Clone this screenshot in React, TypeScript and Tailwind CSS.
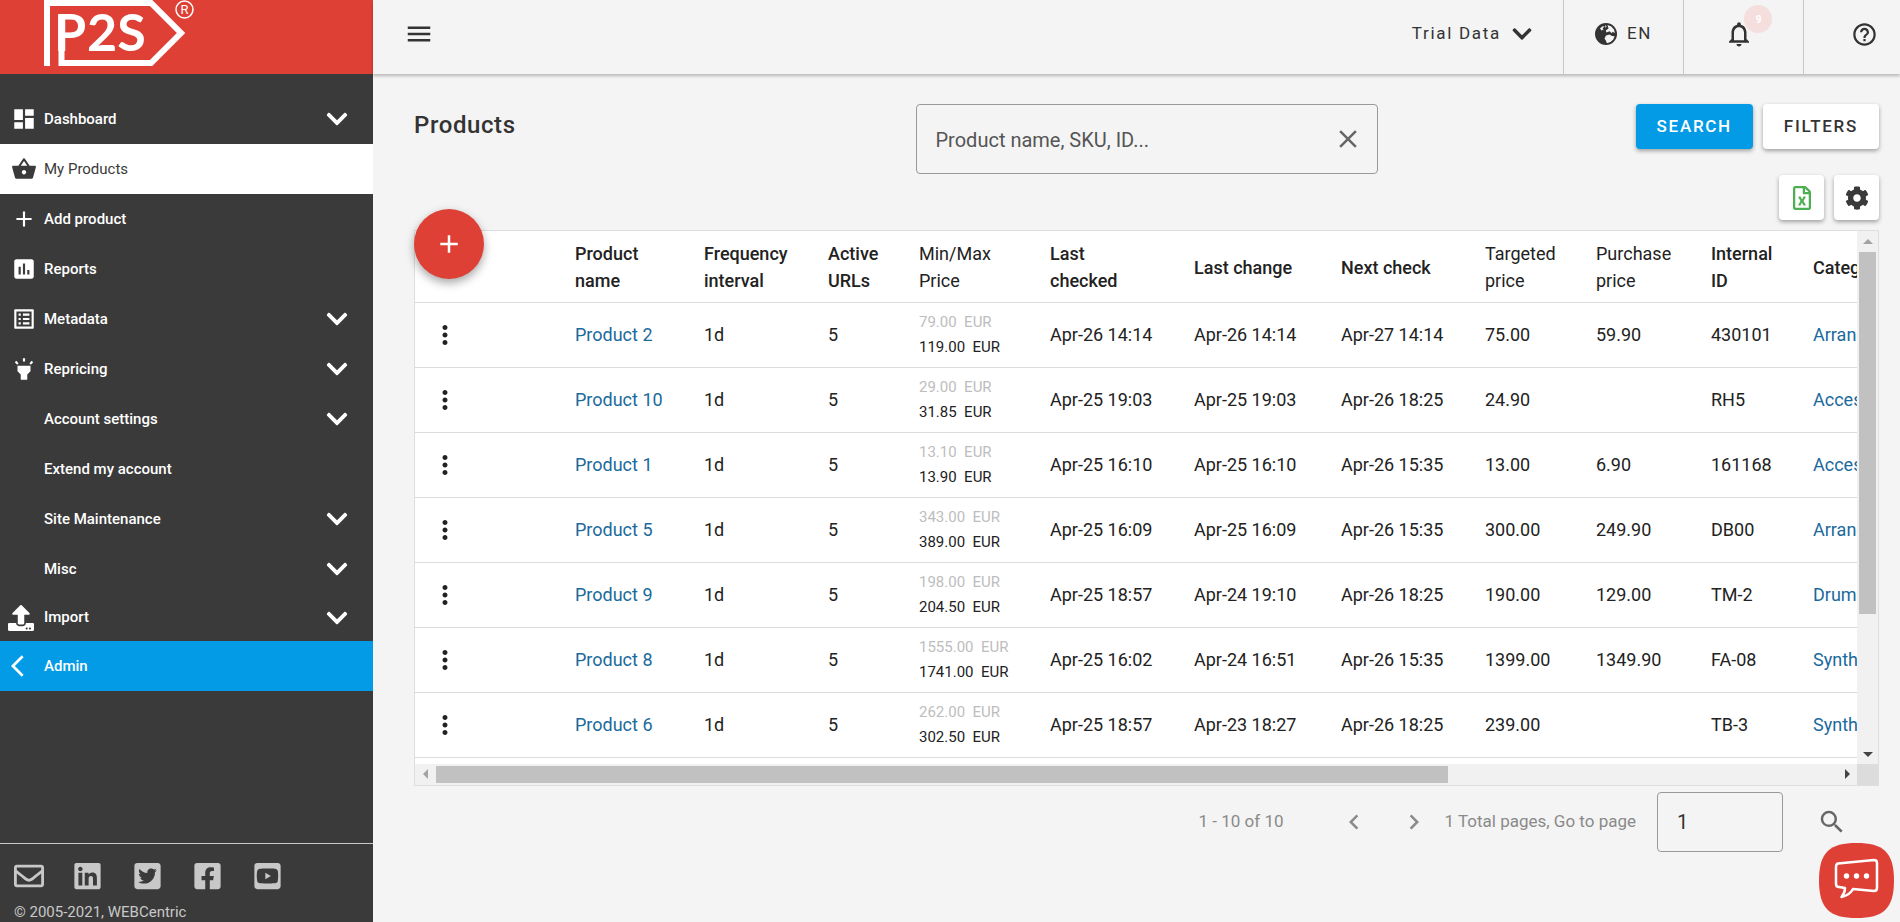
import type { ReactNode } from "react";
import type { IconType } from "react-icons";
import {
  MdAdd,
  MdArrowBackIos,
  MdAssessment,
  MdChevronLeft,
  MdChevronRight,
  MdClear,
  MdDashboard,
  MdHelpOutline,
  MdHighlight,
  MdListAlt,
  MdMenu,
  MdMoreVert,
  MdNotificationsNone,
  MdSearch,
  MdShoppingBasket,
} from "react-icons/md";
import {
  FaChevronDown,
  FaCog,
  FaFacebookSquare,
  FaLinkedin,
  FaRegEnvelope,
  FaRegFileExcel,
  FaTwitterSquare,
  FaUpload,
  FaYoutubeSquare,
} from "react-icons/fa";

type NavItem = {
  label: string;
  icon?: IconType;
  expandable?: boolean;
  tone?: "active" | "accent";
};

const navItems: NavItem[] = [
  { label: "Dashboard", icon: MdDashboard, expandable: true },
  { label: "My Products", icon: MdShoppingBasket, tone: "active" },
  { label: "Add product", icon: MdAdd },
  { label: "Reports", icon: MdAssessment },
  { label: "Metadata", icon: MdListAlt, expandable: true },
  { label: "Repricing", icon: MdHighlight, expandable: true },
  { label: "Account settings", expandable: true },
  { label: "Extend my account" },
  { label: "Site Maintenance", expandable: true },
  { label: "Misc", expandable: true },
  { label: "Import", icon: FaUpload, expandable: true },
  { label: "Admin", icon: MdArrowBackIos, tone: "accent" },
];

const socials: { label: string; icon: IconType; width: string }[] = [
  { label: "Email", icon: FaRegEnvelope, width: "w-[30px]" },
  { label: "LinkedIn", icon: FaLinkedin, width: "w-[27px]" },
  { label: "Twitter", icon: FaTwitterSquare, width: "w-[27px]" },
  { label: "Facebook", icon: FaFacebookSquare, width: "w-[27px]" },
  { label: "YouTube", icon: FaYoutubeSquare, width: "w-[27px]" },
];

const columns: { label: string; width: string; bold: boolean }[] = [
  { label: "Product name", width: "w-[129px]", bold: true },
  { label: "Frequency interval", width: "w-[124px]", bold: true },
  { label: "Active URLs", width: "w-[91px]", bold: true },
  { label: "Min/Max Price", width: "w-[131px]", bold: false },
  { label: "Last checked", width: "w-[144px]", bold: true },
  { label: "Last change", width: "w-[147px]", bold: true },
  { label: "Next check", width: "w-[144px]", bold: true },
  { label: "Targeted price", width: "w-[111px]", bold: false },
  { label: "Purchase price", width: "w-[115px]", bold: false },
  { label: "Internal ID", width: "w-[102px]", bold: true },
  { label: "Category", width: "w-[618px]", bold: true },
];

type Product = {
  name: string;
  min: string;
  max: string;
  checked: string;
  change: string;
  next: string;
  target: string;
  purchase: string;
  id: string;
  category: string;
};

const products: Product[] = [
  { name: "Product 2", min: "79.00", max: "119.00", checked: "Apr-26 14:14", change: "Apr-26 14:14", next: "Apr-27 14:14", target: "75.00", purchase: "59.90", id: "430101", category: "Arrangers" },
  { name: "Product 10", min: "29.00", max: "31.85", checked: "Apr-25 19:03", change: "Apr-25 19:03", next: "Apr-26 18:25", target: "24.90", purchase: "", id: "RH5", category: "Accessories" },
  { name: "Product 1", min: "13.10", max: "13.90", checked: "Apr-25 16:10", change: "Apr-25 16:10", next: "Apr-26 15:35", target: "13.00", purchase: "6.90", id: "161168", category: "Accessories" },
  { name: "Product 5", min: "343.00", max: "389.00", checked: "Apr-25 16:09", change: "Apr-25 16:09", next: "Apr-26 15:35", target: "300.00", purchase: "249.90", id: "DB00", category: "Arrangers" },
  { name: "Product 9", min: "198.00", max: "204.50", checked: "Apr-25 18:57", change: "Apr-24 19:10", next: "Apr-26 18:25", target: "190.00", purchase: "129.00", id: "TM-2", category: "Drums" },
  { name: "Product 8", min: "1555.00", max: "1741.00", checked: "Apr-25 16:02", change: "Apr-24 16:51", next: "Apr-26 15:35", target: "1399.00", purchase: "1349.90", id: "FA-08", category: "Synthesizers" },
  { name: "Product 6", min: "262.00", max: "302.50", checked: "Apr-25 18:57", change: "Apr-23 18:27", next: "Apr-26 18:25", target: "239.00", purchase: "", id: "TB-3", category: "Synthesizers" },
];

function Logo() {
  return (
    <a href="#home" aria-label="P2S" className="flex h-[74px] shrink-0 items-start bg-[#de4036] pl-11">
      <svg viewBox="0 0 150 66" className="h-[66px] w-[150px] text-white" fill="none">
        <path d="M3 66V3H107L137 33L107 63H17.500V15" stroke="currentColor" strokeWidth="6" />
        <text
          x="10"
          y="51"
          fill="currentColor"
          fontFamily="Lato, Roboto, sans-serif"
          fontSize="52"
          fontWeight="700"
        >
          P<tspan x="43">2S</tspan>
        </text>
        <circle cx="140.500" cy="9.500" r="8.500" stroke="currentColor" strokeWidth="1.500" />
        <text
          x="140.500"
          y="14"
          fill="currentColor"
          textAnchor="middle"
          fontFamily="Roboto, sans-serif"
          fontSize="13"
        >
          R
        </text>
      </svg>
    </a>
  );
}

function NavRow({ item }: { item: NavItem }) {
  const Icon = item.icon;
  const tone =
    item.tone === "active"
      ? "bg-white text-[#3a3a3a] font-normal"
      : item.tone === "accent"
        ? "bg-[#039be5] text-white font-medium"
        : "text-white font-medium";
  const height = item.label === "Import" ? "h-[47px]" : "h-[50px]";
  const slot = item.label === "Import" ? "pl-2" : "pl-[11px]";
  return (
    <li>
      <a href={`#${item.label}`} className={`flex items-center pr-6 text-[15px] ${height} ${tone}`}>
        <span className={`flex w-11 shrink-0 items-center ${slot}`}>
          {Icon && <Icon className="size-[26px]" aria-hidden="true" />}
        </span>
        <span className="flex-1">{item.label}</span>
        {item.expandable && <FaChevronDown className="size-6" aria-hidden="true" />}
      </a>
    </li>
  );
}

function Sidebar() {
  return (
    <aside className="flex w-[373px] shrink-0 flex-col bg-[#3a3a3a]">
      <Logo />
      <nav className="flex-1 pt-5">
        <ul>
          {navItems.map((item) => (
            <NavRow key={item.label} item={item} />
          ))}
        </ul>
      </nav>
      <footer className="flex flex-col gap-[11px] border-t border-[#c8c8c8] px-[14px] pt-[17px] text-[#c8c8c8]">
        <div className="flex">
          {socials.map(({ label, icon: Icon, width }) => (
            <a key={label} href={`#${label}`} aria-label={label} className="w-15">
              <Icon className={`h-[30px] ${width}`} />
            </a>
          ))}
        </div>
        <p className="text-[15px] leading-5">© 2005-2021, WEBCentric</p>
      </footer>
    </aside>
  );
}

function GlobeIcon() {
  return (
    <svg viewBox="0 0 22 22" className="size-[22px]" aria-hidden="true">
      <circle cx="11" cy="11" r="11" fill="currentColor" />
      <g fill="#f4f4f4">
        <path d="M12.500 2L16 3.200L19 6.500L19.900 10L17.500 8.800L16.800 10.200L14.500 8.300L11.500 9.500L10.800 7.500L13.500 5.500Z" />
        <path d="M11 12.500L14.500 11.600L17 13L19.600 13.200L18.300 16.500L15.500 19L12 20.200L10.800 17.500L9.500 15.500Z" />
        <path d="M5 5.300L7.800 3.200L9.500 3.600L7.500 5.500L8.500 6.500L6.500 7.500Z" />
        <path d="M10.300 2L11.600 3.500L10.200 4.800Z" />
      </g>
    </svg>
  );
}

function TopBar() {
  return (
    <header className="z-10 flex h-[74px] shrink-0 items-stretch justify-between text-[#333] shadow-[0_2px_3px_rgba(0,0,0,0.25)]">
      <button type="button" aria-label="Toggle menu" className="pb-[6px] pl-[31px]">
        <MdMenu className="size-[30px]" />
      </button>
      <div className="flex text-[17px] tracking-widest">
        <button type="button" className="flex items-center gap-[10px] pr-[30px] pb-[6px]">
          Trial Data
          <FaChevronDown className="size-[22px]" aria-hidden="true" />
        </button>
        <button type="button" className="flex w-[120px] items-center justify-center gap-[10px] border-l border-[#c8c8c8] pb-[6px]">
          <GlobeIcon />
          EN
        </button>
        <button type="button" aria-label="Notifications" className="flex w-[120px] items-center border-l border-[#c8c8c8] pb-[6px] pl-10">
          <span className="relative">
            <MdNotificationsNone className="size-[30px]" aria-hidden="true" />
            <span className="absolute -top-[14px] left-5 flex size-7 items-center justify-center rounded-full bg-[#f5dfde] pl-px text-[10px] font-bold tracking-normal text-white">
              9
            </span>
          </span>
        </button>
        <button type="button" aria-label="Help" className="flex w-[97px] items-center justify-end border-l border-[#c8c8c8] pr-[22px] pb-[6px]">
          <MdHelpOutline className="size-[27px]" />
        </button>
      </div>
    </header>
  );
}

const raised = "shadow-[0_2px_4px_rgba(0,0,0,0.35)]";

function Toolbar() {
  return (
    <div className="grid grid-cols-[1fr_462px_1fr] items-start pt-[30px]">
      <h1 className="pt-[5px] text-[24px] leading-8 font-medium tracking-wide text-[#333]">Products</h1>
      <div className="flex h-[70px] items-center rounded border border-[#999] pr-[14px] pl-[19px]">
        <input
          type="text"
          aria-label="Search products"
          placeholder="Product name, SKU, ID..."
          className="h-[68px] min-w-0 flex-1 bg-transparent pt-[2px] text-[20px] text-[#333] outline-none placeholder:text-[#555]"
        />
        <button type="button" aria-label="Clear" className="text-[#666]">
          <MdClear className="size-[30px]" />
        </button>
      </div>
      <div className="flex flex-col items-end gap-[26px]">
        <div className="flex gap-[10px] text-[17px] font-medium tracking-widest">
          <button type="button" className={`h-[45px] rounded bg-[#039be5] px-[21px] text-white ${raised}`}>
            SEARCH
          </button>
          <button type="button" className={`h-[45px] rounded bg-white px-[21px] text-[#333] ${raised}`}>
            FILTERS
          </button>
        </div>
        <div className="flex gap-[10px]">
          <button type="button" aria-label="Export to Excel" className={`flex size-[45px] items-center justify-center rounded bg-white text-[#4caf50] ${raised}`}>
            <FaRegFileExcel className="size-6" />
          </button>
          <button type="button" aria-label="Settings" className={`flex size-[45px] items-center justify-center rounded bg-white text-[#3a3a3a] ${raised}`}>
            <FaCog className="size-6" />
          </button>
        </div>
      </div>
    </div>
  );
}

function Cell({ children }: { children?: ReactNode }) {
  return <td className="pl-4">{children}</td>;
}

function ProductTable() {
  return (
    <table className="w-[2000px] table-fixed border-collapse text-left text-[18px] text-[#222]">
      <thead>
        <tr className="h-[71px] border-b border-[#dcdcdc] leading-[27px]">
          <th className="w-[144px]" aria-label="Actions" />
          {columns.map((column) => (
            <th
              key={column.label}
              className={`pt-[2px] pr-6 pl-4 ${column.width} ${column.bold ? "font-medium" : "font-normal"}`}
            >
              {column.label}
            </th>
          ))}
        </tr>
      </thead>
      <tbody>
        {products.map((product) => (
          <tr key={product.name} className="h-[65px] border-b border-[#dcdcdc]">
            <td className="pl-[15px]">
              <button type="button" aria-label={`Actions for ${product.name}`} className="flex">
                <MdMoreVert className="size-[30px]" />
              </button>
            </td>
            <Cell>
              <a href={`#${product.name}`} className="text-[#1b6a9c]">
                {product.name}
              </a>
            </Cell>
            <Cell>1d</Cell>
            <Cell>5</Cell>
            <Cell>
              <div className="text-[15px] leading-[25px] whitespace-pre">
                <div className="text-[#bdbdbd]">{product.min + "  EUR"}</div>
                <div>{product.max + "  EUR"}</div>
              </div>
            </Cell>
            <Cell>{product.checked}</Cell>
            <Cell>{product.change}</Cell>
            <Cell>{product.next}</Cell>
            <Cell>{product.target}</Cell>
            <Cell>{product.purchase}</Cell>
            <Cell>{product.id}</Cell>
            <Cell>
              <a href={`#${product.category}`} className="text-[#1b6a9c]">
                {product.category}
              </a>
            </Cell>
          </tr>
        ))}
      </tbody>
    </table>
  );
}

function Arrow({ direction, muted }: { direction: "up" | "down" | "left" | "right"; muted?: boolean }) {
  const paths = {
    up: "M1 8L6 3L11 8Z",
    down: "M1 4L6 9L11 4Z",
    left: "M8 1L3 6L8 11Z",
    right: "M4 1L9 6L4 11Z",
  };
  return (
    <svg viewBox="0 0 12 12" className={muted ? "size-3 text-[#a3a3a3]" : "size-3 text-[#444]"} aria-hidden="true">
      <path d={paths[direction]} fill="currentColor" />
    </svg>
  );
}

function TablePanel() {
  return (
    <section className="relative mt-[10px]">
      <div className="grid grid-cols-[1fr_21px] grid-rows-[1fr_21px] border border-[#dedede] bg-white">
        <div className="min-w-0 overflow-hidden pb-[6px]">
          <ProductTable />
        </div>
        <div className="flex flex-col items-center bg-[#f1f1f1]">
          <div className="flex h-[21px] items-center">
            <Arrow direction="up" muted />
          </div>
          <div className="h-[362px] w-[17px] bg-[#c1c1c1]" />
          <div className="flex flex-1 items-end pb-1">
            <Arrow direction="down" />
          </div>
        </div>
        <div className="flex items-center bg-[#f1f1f1]">
          <div className="flex w-[21px] justify-center">
            <Arrow direction="left" muted />
          </div>
          <div className="h-[17px] w-[70.2%] bg-[#c1c1c1]" />
          <div className="flex flex-1 justify-end pr-1">
            <Arrow direction="right" />
          </div>
        </div>
        <div className="bg-[#dcdcdc]" />
      </div>
      <button
        type="button"
        aria-label="Add product"
        className="absolute -top-[21px] left-0 flex size-[70px] items-center justify-center rounded-full bg-[#de4036] text-white shadow-[0_4px_10px_rgba(0,0,0,0.35)]"
      >
        <MdAdd className="size-[30px]" />
      </button>
    </section>
  );
}

function Pagination() {
  return (
    <div className="flex items-center justify-end pt-[6px] pr-8 text-[17px] text-[#8a8a8a]">
      <span>1 - 10 of 10</span>
      <button type="button" aria-label="Previous page" className="ml-[55px]">
        <MdChevronLeft className="size-[30px]" />
      </button>
      <button type="button" aria-label="Next page" className="ml-[30px]">
        <MdChevronRight className="size-[30px]" />
      </button>
      <label htmlFor="page-number" className="ml-4">
        1 Total pages, Go to page
      </label>
      <input
        id="page-number"
        type="text"
        defaultValue="1"
        className="ml-[21px] h-[60px] w-[126px] rounded border border-[#999] bg-transparent px-[19px] text-[20px] text-[#333] outline-none"
      />
      <button type="button" aria-label="Go to page" className="ml-[34px] text-[#666]">
        <MdSearch className="size-[30px]" />
      </button>
    </div>
  );
}

function ChatButton() {
  return (
    <button type="button" aria-label="Open chat" className="fixed right-[6px] bottom-1 size-[75px]">
      <svg viewBox="0 0 75 75" className="size-full">
        <path
          d="M37.500 0C64 0 75 9 75 37.500S64 75 37.500 75S0 66 0 37.500S11 0 37.500 0Z"
          fill="#de4036"
        />
        <path
          d="M19 20.500L55 17Q58 17 58 20V45Q58 48 55 48L34 46Q31 52 22.500 54Q26 50 26 45L20 44Q17 44 17 41V24Q17 21 19 20.500Z"
          fill="none"
          stroke="white"
          strokeWidth="2.500"
          strokeLinejoin="round"
        />
        <circle cx="27.500" cy="33" r="2.700" fill="white" />
        <circle cx="37.500" cy="33" r="2.700" fill="white" />
        <circle cx="47.500" cy="33" r="2.700" fill="white" />
      </svg>
    </button>
  );
}

export default function App() {
  return (
    <div className="flex min-h-screen bg-[#f4f4f4] font-[Roboto,'Liberation_Sans',sans-serif]">
      <Sidebar />
      <div className="flex min-w-0 flex-1 flex-col">
        <TopBar />
        <main className="flex-1 pr-[21px] pl-[41px]">
          <Toolbar />
          <TablePanel />
          <Pagination />
        </main>
      </div>
      <ChatButton />
    </div>
  );
}
